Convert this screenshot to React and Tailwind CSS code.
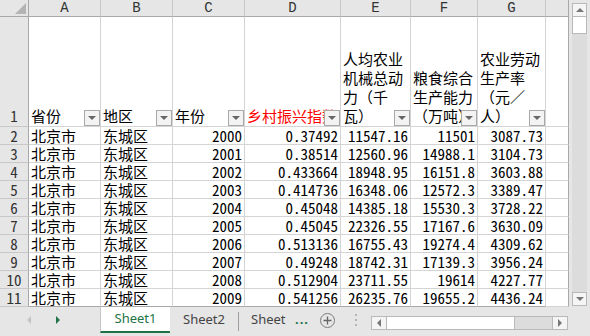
import React from 'react';

const rows = [
  ['2000', '0.37492', '11547.16', '11501', '3087.73'],
  ['2001', '0.38514', '12560.96', '14988.1', '3104.73'],
  ['2002', '0.433664', '18948.95', '16151.8', '3603.88'],
  ['2003', '0.414736', '16348.06', '12572.3', '3389.47'],
  ['2004', '0.45048', '14385.18', '15530.3', '3728.22'],
  ['2005', '0.45045', '22326.55', '17167.6', '3630.09'],
  ['2006', '0.513136', '16755.43', '19274.4', '4309.62'],
  ['2007', '0.49248', '18742.31', '17139.3', '3956.24'],
  ['2008', '0.512904', '23711.55', '19614', '4227.77'],
  ['2009', '0.541256', '26235.76', '19655.2', '4436.24'],
];

const letters = ['A', 'B', 'C', 'D', 'E', 'F', 'G', ''];

const headers = [
  { lines: ['省份'] },
  { lines: ['地区'] },
  { lines: ['年份'] },
  { lines: ['乡村振兴指数'], red: true },
  { lines: ['人均农业', '机械总动', '力（千', '瓦）'] },
  { lines: ['粮食综合', '生产能力', '（万吨）'] },
  { lines: ['农业劳动', '生产率', '（元／', '人）'] },
];

const cellFont = "font-['Noto_Sans_Mono_CJK_SC','Noto_Sans_CJK_SC',monospace]";

function FilterBtn() {
  return (
    <span className="absolute right-0 bottom-0 w-4 h-4 bg-[#f3f3f3] border border-[#a9a9a9] flex items-center justify-center">
      <span className="w-0 h-0 border-l-4 border-r-4 border-t-4 border-l-transparent border-r-transparent border-t-[#666]" />
    </span>
  );
}

function Grid() {
  return (
    <div className={`grid grid-cols-[29px_72px_72px_72px_96px_70px_67px_68px_23px] text-[15px] text-black ${cellFont}`}>
      {/* column letters */}
      <div className="h-[17px] bg-[#e6e6e6] border-r border-b border-[#a8a8a8] relative overflow-hidden">
        <span className="absolute right-[2px] bottom-[2px] w-0 h-0 border-b-[11px] border-l-[11px] border-b-[#b4b4b4] border-l-transparent" />
      </div>
      {letters.map((l, i) => (
        <div
          key={i}
          className={`h-[17px] bg-[#e6e6e6] border-b border-[#a8a8a8] flex items-center justify-center text-[14px] leading-none text-[#333] font-['Liberation_Mono',monospace] ${i === 7 ? 'border-r border-r-[#a8a8a8]' : 'border-r border-r-[#c8c8c8]'}`}
        >
          {l}
        </div>
      ))}

      {/* row 1 */}
      <div className="h-[110px] bg-[#e6e6e6] border-r border-b border-r-[#a8a8a8] border-b-[#c8c8c8] flex items-end justify-center pb-[1px] leading-[19px] text-[#333]">
        1
      </div>
      {headers.map((h, i) => (
        <div
          key={i}
          className={`h-[110px] relative border-r border-b border-[#d4d4d4] flex flex-col justify-end pl-[2px] pb-[1px] leading-[19px] overflow-hidden whitespace-nowrap ${h.red ? 'text-[#ff0000]' : ''}`}
        >
          {h.lines.map((t, j) => (
            <div key={j}>{t}</div>
          ))}
          <FilterBtn />
        </div>
      ))}
      <div className="h-[110px] border-r border-b border-r-[#a8a8a8] border-b-[#d4d4d4]" />

      {/* data rows */}
      {rows.map((r, i) => (
        <React.Fragment key={i}>
          <div className={`h-[18px] bg-[#e6e6e6] border-r border-b border-r-[#a8a8a8] border-b-[#c8c8c8] flex items-center justify-center leading-none text-[#333] ${i === 9 ? 'border-b-[#a8a8a8]' : ''}`}>
            {i + 2}
          </div>
          <div className={`h-[18px] border-r border-b border-[#d4d4d4] flex items-center pl-[2px] leading-none whitespace-nowrap ${i === 9 ? 'border-b-[#a8a8a8]' : ''}`}>北京市</div>
          <div className={`h-[18px] border-r border-b border-[#d4d4d4] flex items-center pl-[2px] leading-none whitespace-nowrap ${i === 9 ? 'border-b-[#a8a8a8]' : ''}`}>东城区</div>
          {r.map((v, j) => (
            <div
              key={j}
              className={`h-[18px] border-r border-b border-[#d4d4d4] flex items-center justify-end pr-[2px] leading-none whitespace-nowrap ${i === 9 ? 'border-b-[#a8a8a8]' : ''}`}
            >
              {v}
            </div>
          ))}
          <div className={`h-[18px] border-r border-b border-r-[#a8a8a8] border-b-[#d4d4d4] ${i === 9 ? 'border-b-[#a8a8a8]' : ''}`} />
        </React.Fragment>
      ))}
    </div>
  );
}

function VScroll() {
  return (
    <div className="w-[21px] h-[307px] bg-[#e6e6e6] flex flex-col px-[3px] pt-[3px] pb-[1px]">
      <div className="h-[14px] bg-[#f5f5f5] border border-[#b9b9b9] flex items-center justify-center">
        <span className="w-0 h-0 border-l-4 border-r-4 border-b-4 border-l-transparent border-r-transparent border-b-[#777]" />
      </div>
      <div className="h-[17px] bg-white border border-t-0 border-[#b9b9b9]" />
      <div className="flex-1 bg-[#dcdcdc]" />
      <div className="h-[14px] bg-[#f5f5f5] border border-[#b9b9b9] flex items-center justify-center">
        <span className="w-0 h-0 border-l-4 border-r-4 border-t-4 border-l-transparent border-r-transparent border-t-[#777]" />
      </div>
    </div>
  );
}

function TabBar() {
  return (
    <div className="h-[29px] bg-[#e6e6e6] flex items-start font-['Noto_Sans',sans-serif] text-[13px]">
      <div className="w-[100px] h-[26px] flex items-center">
        <span className="ml-[27px] w-0 h-0 border-t-4 border-b-4 border-r-4 border-t-transparent border-b-transparent border-r-[#c4c4c4]" />
        <span className="ml-[25px] w-0 h-0 border-t-4 border-b-4 border-l-4 border-t-transparent border-b-transparent border-l-[#217346]" />
      </div>
      <div className="w-[70px] h-[26px] bg-white border-l border-[#c6c6c6] border-b-2 border-b-[#217346] flex items-center justify-center text-[#217346]">
        Sheet1
      </div>
      <div className="w-[68px] h-[26px] flex items-center justify-center text-[#444]">Sheet2</div>
      <div className="w-px h-[19px] mt-[5px] bg-[#a0a0a0]" />
      <div className="w-[52px] h-[26px] flex items-center pl-[12px] text-[#444] whitespace-nowrap">Sheet</div>
      <div className="w-[22px] h-[26px] flex items-center pl-[4px] text-[#217346] font-bold tracking-[1px]">...</div>
      <div className="w-[28px] h-[26px] flex items-center pl-[7px]">
        <span className="w-[15px] h-[15px] rounded-full border border-[#7a7a7a] flex items-center justify-center">
          <svg width="9" height="9" viewBox="0 0 9 9">
            <path d="M4.5 0.5v8M0.5 4.5h8" stroke="#666" strokeWidth="1.3" />
          </svg>
        </span>
      </div>
      <div className="w-[30px] h-[26px] flex flex-col items-center justify-center gap-[3px]">
        <span className="w-[2px] h-[2px] bg-[#b4b4b4]" />
        <span className="w-[2px] h-[2px] bg-[#b4b4b4]" />
        <span className="w-[2px] h-[2px] bg-[#b4b4b4]" />
      </div>
      <div className="mt-[9px] w-[197px] h-[14px] flex border border-[#b9b9b9] bg-[#dcdcdc]">
        <div className="w-[15px] h-full bg-[#f5f5f5] border-r border-[#b9b9b9] flex items-center justify-center">
          <span className="w-0 h-0 border-t-4 border-b-4 border-r-4 border-t-transparent border-b-transparent border-r-[#777]" />
        </div>
        <div className="w-[128px] h-full bg-white border-r border-[#b9b9b9]" />
        <div className="flex-1" />
        <div className="w-[15px] h-full bg-[#f5f5f5] border-l border-[#b9b9b9] flex items-center justify-center">
          <span className="w-0 h-0 border-t-4 border-b-4 border-l-4 border-t-transparent border-b-transparent border-l-[#777]" />
        </div>
      </div>
    </div>
  );
}

export default function App() {
  return (
    <div className="w-[590px] h-[336px] overflow-hidden bg-white">
      <div className="flex">
        <Grid />
        <VScroll />
      </div>
      <TabBar />
    </div>
  );
}
